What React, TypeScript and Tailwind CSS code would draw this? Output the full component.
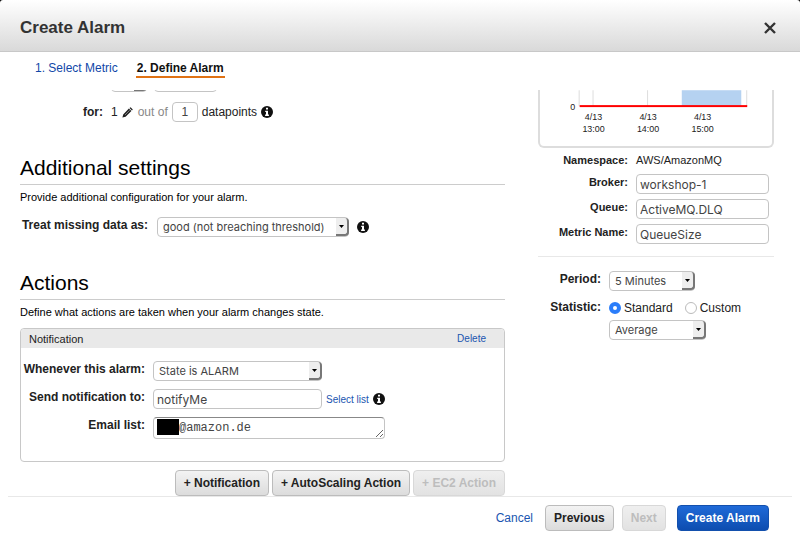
import { useState, type ReactNode } from "react";

const fieldBorder = "rounded border border-[#c4c4c4] bg-white text-[#444]";
const labelText = "text-right text-[12px] leading-4 font-bold text-[#222]";
const smallLabelText = "text-right text-[11px] leading-4 font-bold text-[#222]";

function InfoIcon() {
  return (
    <svg viewBox="0 0 12 12" className="size-3 shrink-0" role="img" aria-label="Info">
      <circle cx="6" cy="6" r="6" fill="#111" />
      <path d="M5 1.8h2v1.7H5zM4.2 4.7H7v3.9h.9V10H4.1V8.6H5V6h-.8z" fill="#fff" />
    </svg>
  );
}

function PencilIcon() {
  return (
    <svg viewBox="0 0 11 11" className="size-[11px]" aria-hidden="true">
      <path d="M.4 10.6l.8-3.2L6.9 1.6l2.5 2.5-5.8 5.7zM7.5 1L8.6.2l2.2 2.2-.8 1.1z" fill="#222" />
      <path d="M3 8L7.6 3.3" stroke="#aaa" strokeWidth=".7" />
    </svg>
  );
}

function Select({ id, label, options, className }: { id: string; label?: string; options: string[]; className: string }) {
  return (
    <div className={`relative h-5 ${className}`}>
      <select id={id} aria-label={label} className={`block h-5 w-full appearance-none pl-[5px] font-['Inter',sans-serif] text-[11px] leading-4 ${fieldBorder}`}>
        {options.map((o) => (
          <option key={o}>{o}</option>
        ))}
      </select>
      <span className="pointer-events-none absolute top-px right-0 flex h-[18px] w-[13px] items-center justify-center rounded-r-sm border-r-2 border-b-2 border-[#777] bg-[#eee]">
        <svg viewBox="0 0 5 3" className="h-[3px] w-[5px]" aria-hidden="true">
          <path d="M0 0h5L2.5 3z" fill="#000" />
        </svg>
      </span>
    </div>
  );
}

function TextField({ id, value, className }: { id: string; value: string; className: string }) {
  return (
    <input
      id={id}
      type="text"
      defaultValue={value}
      className={`h-5 px-[3px] font-['Inter',sans-serif] text-[12px] leading-4 ${fieldBorder} ${className}`}
    />
  );
}

function Button({ children, disabled, primary, className = "" }: { children: ReactNode; disabled?: boolean; primary?: boolean; className?: string }) {
  const look = primary
    ? "border-[#1350ad] bg-linear-to-b from-[#1f6ad8] to-[#0d4db0] text-white"
    : disabled
      ? "border-[#d8d8d8] bg-linear-to-b from-[#efefef] to-[#e2e2e2] text-[#bdbdbd]"
      : "border-[#bcbcbc] bg-linear-to-b from-[#f3f3f3] to-[#dcdcdc] text-[#222]";
  return (
    <button type="button" disabled={disabled} className={`h-[26px] rounded border px-2 text-[12px] leading-4 font-bold whitespace-nowrap ${look} ${className}`}>
      {children}
    </button>
  );
}

function Section({ title, text }: { title: string; text: string }) {
  return (
    <>
      <h2 className="border-b border-[#ccc] pb-1 text-[21px] leading-6 text-black">{title}</h2>
      <p className="mt-1 text-[11px] leading-4 text-black">{text}</p>
    </>
  );
}

function Chart() {
  const ticks = [
    { x: 54, time: "13:00" },
    { x: 109, time: "14:00" },
    { x: 164, time: "15:00" },
  ];
  return (
    <svg viewBox="0 0 234 56" className="h-14 w-full" role="img" aria-label="Queue size over time">
      <path d="M39.500 0V16M53.500 0V16M108.500 0V16M208.500 0V16" stroke="#ddd" />
      <rect x="143" y="0" width="60" height="16" fill="#b5d2f1" />
      <rect x="40" y="15" width="169" height="2" fill="#f00" />
      <text x="33" y="20" fontSize="9" textAnchor="middle" fill="#222">0</text>
      {ticks.map((t) => (
        <g key={t.time} fontSize="9" textAnchor="middle" fill="#222">
          <text x={t.x} y="30">4/13</text>
          <text x={t.x} y="42">{t.time}</text>
        </g>
      ))}
    </svg>
  );
}

function DimensionRow({ id, label, value }: { id: string; label: string; value: string }) {
  return (
    <div className="flex h-5 items-start">
      <label htmlFor={id} className={`w-[90px] ${smallLabelText}`}>{label}</label>
      <TextField id={id} value={value} className="mr-[5px] ml-2 min-w-0 flex-1" />
    </div>
  );
}

function StatRadio({ label, checked, onSelect }: { label: string; checked: boolean; onSelect: () => void }) {
  return (
    <label className="flex items-center gap-[3px] text-[12px] leading-4 text-[#222]">
      <input
        type="radio"
        name="statistic"
        checked={checked}
        onChange={onSelect}
        className="size-3 appearance-none rounded-full border border-[#bbb] bg-white checked:border-4 checked:border-[#2a7dfa]"
      />
      {label}
    </label>
  );
}

export default function App() {
  const [stat, setStat] = useState("Standard");
  return (
    <div className="flex min-h-screen flex-col bg-white font-['Liberation_Sans',Arial,sans-serif]">
      <div className="bg-black">
        <header className="flex h-[52px] items-center justify-between rounded-t-[3px] border-b border-[#c8c8c8] bg-linear-to-b from-white to-[#d9d9d9] pt-1 pr-6 pl-5">
          <h1 className="text-[17px] leading-6 font-bold text-[#333]">Create Alarm</h1>
          <button type="button" aria-label="Close" className="flex size-3 items-center justify-center">
            <svg viewBox="0 0 12 12" className="size-3" aria-hidden="true">
              <path d="M1 1l10 10M11 1L1 11" stroke="#333" strokeWidth="2.400" />
            </svg>
          </button>
        </header>
      </div>

      <nav className="flex h-[38px] items-start gap-[18px] pt-2 pl-[35px] text-[12px] leading-4">
        <a href="#metric" className="text-[#1147a8]">1. Select Metric</a>
        <a href="#define" aria-current="step" className="border-b-2 border-[#e07214] px-px font-bold text-[#111]">2. Define Alarm</a>
      </nav>

      <main className="flex gap-[33px] overflow-hidden pr-[26px] pl-5">
        <section className="min-w-0 flex-1">
          <div className="flex h-[2px] items-end gap-[7px] overflow-hidden pl-[91px]">
            <Select id="comparison" label="Comparison" className="w-9 shrink-0" options={[">="]} />
            <input aria-label="Threshold" className={`h-5 w-[63px] shrink-0 ${fieldBorder}`} />
          </div>
          <div className="mt-[10px] flex h-5 items-center pl-[63px] text-[12px] leading-4 text-[#222]">
            <span className="mr-2 font-bold">for:</span>
            <span className="mr-1">1</span>
            <button type="button" aria-label="Edit periods" className="mr-[5px]"><PencilIcon /></button>
            <span className="mr-1 text-[#888]">out of</span>
            <input id="points" type="text" defaultValue="1" className={`mr-1 h-5 w-[26px] text-center ${fieldBorder}`} />
            <label htmlFor="points" className="mr-1">datapoints</label>
            <InfoIcon />
          </div>

          <div className="mt-[34px]">
            <Section title="Additional settings" text="Provide additional configuration for your alarm." />
            <div className="mt-3 flex h-5 items-start">
              <label htmlFor="missing" className={`w-32 whitespace-nowrap ${labelText}`}>Treat missing data as:</label>
              <Select id="missing" className="ml-[9px] w-48" options={["good (not breaching threshold)", "bad (breaching threshold)", "ignore", "missing"]} />
              <span className="ml-2 flex h-5 items-center"><InfoIcon /></span>
            </div>
          </div>

          <div className="mt-[34px]">
            <Section title="Actions" text="Define what actions are taken when your alarm changes state." />
            <div className="mt-2 rounded border border-[#c8c8c8] pb-[22px]">
              <div className="flex h-[19px] items-center justify-between rounded-t bg-[#e9e9e9] pr-[18px] pl-2 text-[11px] leading-4 text-[#222]">
                <h3>Notification</h3>
                <a href="#delete" className="text-[10px] text-[#1a55b0]">Delete</a>
              </div>
              <div className="mt-[13px] flex flex-col gap-2">
                <div className="flex h-5 items-start">
                  <label htmlFor="state" className={`w-[124px] whitespace-nowrap ${labelText}`}>Whenever this alarm:</label>
                  <Select id="state" className="ml-2 w-[169px]" options={["State is ALARM", "State is OK", "State is INSUFFICIENT"]} />
                </div>
                <div className="flex h-5 items-start">
                  <label htmlFor="topic" className={`w-[124px] whitespace-nowrap ${labelText}`}>Send notification to:</label>
                  <TextField id="topic" value="notifyMe" className="ml-2 w-[169px]" />
                  <a href="#lists" className="ml-1 pt-[3px] text-[10px] leading-4 text-[#1a55b0]">Select list</a>
                  <span className="ml-1 flex h-5 items-center"><InfoIcon /></span>
                </div>
                <div className="flex h-[22px] items-start">
                  <label htmlFor="emails" className={`w-[124px] ${labelText}`}>Email list:</label>
                  <div className="relative ml-2 h-[22px]">
                    <textarea
                      id="emails"
                      rows={1}
                      defaultValue="@amazon.de"
                      className="block h-[22px] w-[232px] overflow-hidden rounded border border-[#c4c4c4] border-t-[#888] bg-white pt-[2px] pl-[25px] font-['Liberation_Mono',monospace] text-[12px] leading-4 text-[#444]"
                    />
                    <span className="absolute top-[2px] left-1 h-4 w-[22px] bg-black" />
                  </div>
                </div>
              </div>
            </div>
            <div className="mt-2 flex justify-end gap-[3px]">
              <Button>+ Notification</Button>
              <Button>+ AutoScaling Action</Button>
              <Button disabled>+ EC2 Action</Button>
            </div>
          </div>
        </section>

        <aside className="w-[236px] shrink-0">
          <div className="rounded-b-md border-x-2 border-b-2 border-[#ddd]">
            <Chart />
          </div>
          <div className="mt-1 flex">
            <span className={`w-[90px] ${smallLabelText}`}>Namespace:</span>
            <span className="ml-2 text-[11px] leading-4 text-[#222]">AWS/AmazonMQ</span>
          </div>
          <div className="mt-[6px] flex flex-col gap-[5px] border-b border-[#e8e8e8] pb-3">
            <DimensionRow id="broker" label="Broker:" value="workshop-1" />
            <DimensionRow id="queue" label="Queue:" value="ActiveMQ.DLQ" />
            <DimensionRow id="metric" label="Metric Name:" value="QueueSize" />
          </div>
          <div className="mt-[14px] flex h-5 items-start">
            <label htmlFor="period" className={`w-[63px] ${labelText}`}>Period:</label>
            <Select id="period" className="ml-2 w-[86px]" options={["5 Minutes", "1 Minute", "15 Minutes", "1 Hour"]} />
          </div>
          <div className="mt-2 flex items-start">
            <span className={`w-[63px] ${labelText}`}>Statistic:</span>
            <div className="ml-2 pt-px">
              <div className="flex gap-3">
                <StatRadio label="Standard" checked={stat === "Standard"} onSelect={() => setStat("Standard")} />
                <StatRadio label="Custom" checked={stat === "Custom"} onSelect={() => setStat("Custom")} />
              </div>
              <Select id="stat" label="Statistic" className="mt-1 w-[97px]" options={["Average", "Minimum", "Maximum", "Sum"]} />
            </div>
          </div>
        </aside>
      </main>

      <footer className="mx-2 flex items-center justify-end border-t border-[#e8e8e8] pt-2 pr-[23px]">
        <a href="#cancel" className="mr-3 text-[12px] leading-4 text-[#1a55b0]">Cancel</a>
        <Button className="mr-2">Previous</Button>
        <Button disabled className="mr-[11px]">Next</Button>
        <Button primary>Create Alarm</Button>
      </footer>
    </div>
  );
}
